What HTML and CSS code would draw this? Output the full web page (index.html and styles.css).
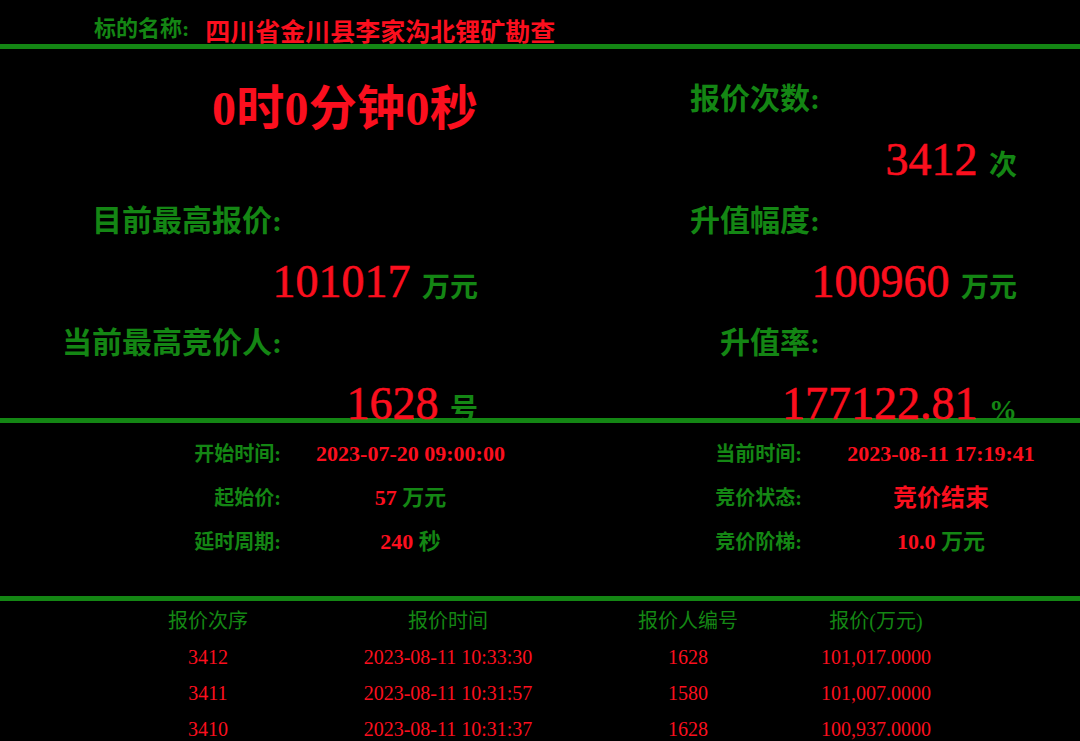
FILE: index.html
```html
<!DOCTYPE html>
<html lang="zh-CN">
<head>
<meta charset="utf-8">
<title>竞价大屏</title>
<link rel="stylesheet" href="styles.css">
</head>
<body>
<div class="page">
  <header class="title-bar">
    <span class="title-label">标的名称:</span>
    <span class="title-name">四川省金川县李家沟北锂矿勘查</span>
  </header>

  <section class="summary">
    <div class="summary-col">
      <div class="row timer-row"><span class="timer">0时0分钟0秒</span></div>
      <div class="row"></div>
      <div class="row label">目前最高报价:</div>
      <div class="row value">101017 <span class="unit">万元</span></div>
      <div class="row label">当前最高竞价人:</div>
      <div class="row value">1628 <span class="unit">号</span></div>
    </div>
    <div class="summary-col right">
      <div class="row label">报价次数:</div>
      <div class="row value">3412 <span class="unit">次</span></div>
      <div class="row label">升值幅度:</div>
      <div class="row value">100960 <span class="unit">万元</span></div>
      <div class="row label">升值率:</div>
      <div class="row value">177122.81 <span class="unit">%</span></div>
    </div>
  </section>

  <section class="details">
    <div class="d-label">开始时间:</div>
    <div class="d-value">2023-07-20 09:00:00</div>
    <div class="d-label">当前时间:</div>
    <div class="d-value">2023-08-11 17:19:41</div>

    <div class="d-label">起始价:</div>
    <div class="d-value">57 <span class="d-unit">万元</span></div>
    <div class="d-label">竞价状态:</div>
    <div class="d-value status">竞价结束</div>

    <div class="d-label">延时周期:</div>
    <div class="d-value">240 <span class="d-unit">秒</span></div>
    <div class="d-label">竞价阶梯:</div>
    <div class="d-value">10.0 <span class="d-unit">万元</span></div>
  </section>

  <section class="bids">
    <div class="b-head">报价次序</div>
    <div class="b-head">报价时间</div>
    <div class="b-head">报价人编号</div>
    <div class="b-head">报价(万元)</div>

    <div class="b-cell">3412</div>
    <div class="b-cell">2023-08-11 10:33:30</div>
    <div class="b-cell">1628</div>
    <div class="b-cell">101,017.0000</div>

    <div class="b-cell">3411</div>
    <div class="b-cell">2023-08-11 10:31:57</div>
    <div class="b-cell">1580</div>
    <div class="b-cell">101,007.0000</div>

    <div class="b-cell">3410</div>
    <div class="b-cell">2023-08-11 10:31:37</div>
    <div class="b-cell">1628</div>
    <div class="b-cell">100,937.0000</div>
  </section>
</div>
</body>
</html>
```

FILE: styles.css
```css
html, body {
  margin: 0;
  padding: 0;
  background: #000;
}

body {
  font-family: "Liberation Serif", "Noto Sans CJK SC", serif;
  overflow: hidden;
}

.page {
  width: 1080px;
}

/* ---------- title ---------- */
.title-bar {
  height: 44px;
  display: flex;
  align-items: flex-start;
  gap: 16px;
  padding-left: 94px;
  border-bottom: 5px solid #148614;
}

.title-label {
  color: #148614;
  font-size: 22px;
  font-weight: bold;
  line-height: 22px;
  margin-top: 18px;
}

.title-name {
  color: #fb0f1e;
  font-size: 25px;
  font-weight: bold;
  line-height: 25px;
  margin-top: 20px;
}

/* ---------- summary ---------- */
.summary {
  display: grid;
  grid-template-columns: 540px 540px;
  height: 350px;
  padding-top: 19px;
  border-bottom: 5px solid #148614;
}

.summary-col {
  display: flex;
  flex-direction: column;
}

.row {
  box-sizing: border-box;
  height: 61px;
  flex: none;
  line-height: 61px;
  text-align: right;
  padding-right: 62px;
  white-space: nowrap;
}

.timer-row {
  padding-top: 10px;
}

.timer {
  color: #fb0f1e;
  font-size: 48px;
  font-weight: bold;
  letter-spacing: 0.3px;
}

.label {
  color: #148614;
  font-size: 30px;
  font-weight: bold;
  padding-right: 258px;
}

.right .label {
  padding-right: 260px;
}

.right .row.value {
  padding-right: 63px;
}

.value {
  color: #fb0f1e;
  font-size: 46px;
  -webkit-text-stroke: 0.6px #fb0f1e;
}

.unit {
  color: #148614;
  font-size: 28px;
  font-weight: bold;
  -webkit-text-stroke: 0;
}

/* ---------- details ---------- */
.details {
  display: grid;
  grid-template-columns: 281px 259px 262px 278px;
  grid-auto-rows: 44px;
  height: 164px;
  padding-top: 9px;
  border-bottom: 5px solid #148614;
  line-height: 44px;
  white-space: nowrap;
}

.d-label {
  text-align: right;
  color: #148614;
  font-size: 20px;
  font-weight: bold;
}

.d-value {
  text-align: center;
  color: #fb0f1e;
  font-size: 22px;
  font-weight: bold;
}

.d-unit {
  color: #148614;
}

.status {
  font-size: 24px;
}

/* ---------- bids table ---------- */
.bids {
  display: grid;
  grid-template-columns: 240px 240px 240px 136px;
  grid-auto-rows: 36px;
  padding-left: 88px;
  padding-top: 2px;
  line-height: 36px;
  font-size: 20px;
  text-align: center;
  white-space: nowrap;
}

.b-head {
  color: #148614;
}

.b-cell {
  color: #fb0f1e;
}
```
